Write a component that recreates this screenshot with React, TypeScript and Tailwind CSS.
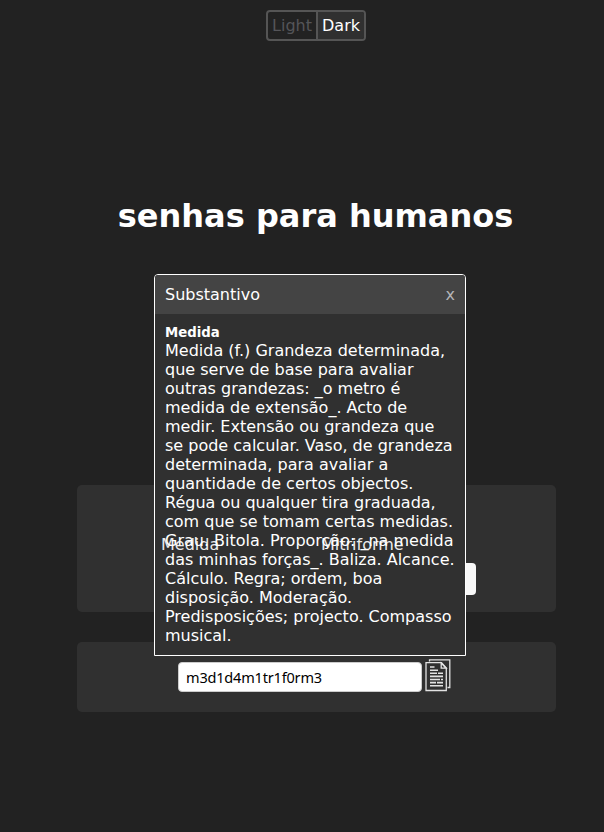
const definition = [
  'Medida (f.) Grandeza determinada,',
  'que serve de base para avaliar',
  'outras grandezas: _o metro é',
  'medida de extensão_. Acto de',
  'medir. Extensão ou grandeza que',
  'se pode calcular. Vaso, de grandeza',
  'determinada, para avaliar a',
  'quantidade de certos objectos.',
  'Régua ou qualquer tira graduada,',
  'com que se tomam certas medidas.',
  'Grau. Bitola. Proporção: _na medida',
  'das minhas forças_. Baliza. Alcance.',
  'Cálculo. Regra; ordem, boa',
  'disposição. Moderação.',
  'Predisposições; projecto. Compasso',
  'musical.',
];

function ThemeSwitch() {
  return (
    <div className="ml-[266px] flex h-[31px] w-[100px] overflow-hidden rounded-[4px] border-2 border-[#555555]">
      <button className="w-[50px] border-r-2 border-[#555555] text-center leading-[27px] text-[#555559]">Light</button>
      <button className="flex-1 bg-[#303030] text-center leading-[27px] text-white">Dark</button>
    </div>
  );
}

function CopyIcon() {
  return (
    <svg width="26" height="33" viewBox="0 0 26 33" fill="none" stroke="#e2e2e2" strokeWidth="1.3">
      <path d="M4.5 2.5V0.8H24.8V28.5H22.5" />
      <path d="M1 3.7H16.5L21.3 9V31.5H1Z" />
      <path d="M16.2 4V9.2H21.2Z" />
      <path strokeWidth="1.6" d="M5 8H9.5M5 11.2H13M5 14.2H12M13 14.2H18M5 17.4H18M5 20.5H15M16 20.5H18M5 23.6H11M12 23.6H18M5 26.8H18" />
    </svg>
  );
}

function DefinitionPopup() {
  return (
    <section className="absolute left-[154px] top-[274px] z-10 h-[382px] w-[312px] overflow-hidden rounded-t-[4px] border border-white bg-[#303030]">
      <header className="flex h-[39px] items-center justify-between bg-[#444444] px-[10px]">
        <span>Substantivo</span>
        <button className="text-[#b4b4b8]">x</button>
      </header>
      <div className="px-[10px] pt-[10px]">
        <h2 className="h-[17px] text-[13.28px] font-bold leading-[18px]">Medida</h2>
        <p className="leading-[19px]">
          {definition.map((line) => (
            <span key={line} className="block whitespace-nowrap">{line}</span>
          ))}
        </p>
      </div>
    </section>
  );
}

export default function App() {
  return (
    <main className="relative h-[832px] w-[604px] overflow-hidden bg-[#222222] pt-[10px] font-['DejaVu_Sans',sans-serif] text-[16px] leading-[19px] text-white">
      <ThemeSwitch />
      <h1 className="ml-[76px] mt-[156px] w-[479px] text-center text-[32px] font-bold leading-[38px]">senhas para humanos</h1>
      <section className="ml-[77px] mt-[250px] flex h-[127px] w-[479px] flex-col rounded-[5px] bg-[#303030] px-[80px] pt-[50px]">
        <div className="relative z-20 ml-[4px] grid h-[28px] grid-cols-[160px_1fr] opacity-90">
          <span>Medida</span>
          <span>Mitriforme</span>
        </div>
        <button className="h-[32px] w-[319px] rounded-[4px] bg-[#f8f8f8]" aria-label="Gerar senha" />
      </section>
      <section className="ml-[77px] mt-[30px] flex h-[70px] w-[479px] items-start rounded-[5px] bg-[#303030] pl-[101px] pt-[17px]">
        <div className="mt-[3px] h-[30px] w-[244px] rounded-[4px] border border-[#cccccc] bg-white pl-[7px] font-['Noto_Sans',sans-serif] text-[14.5px] leading-[29px] tracking-[-0.18px] text-black">
          m3d1d4m1tr1f0rm3
        </div>
        <div className="ml-[3px]"><CopyIcon /></div>
      </section>
      <DefinitionPopup />
    </main>
  );
}
